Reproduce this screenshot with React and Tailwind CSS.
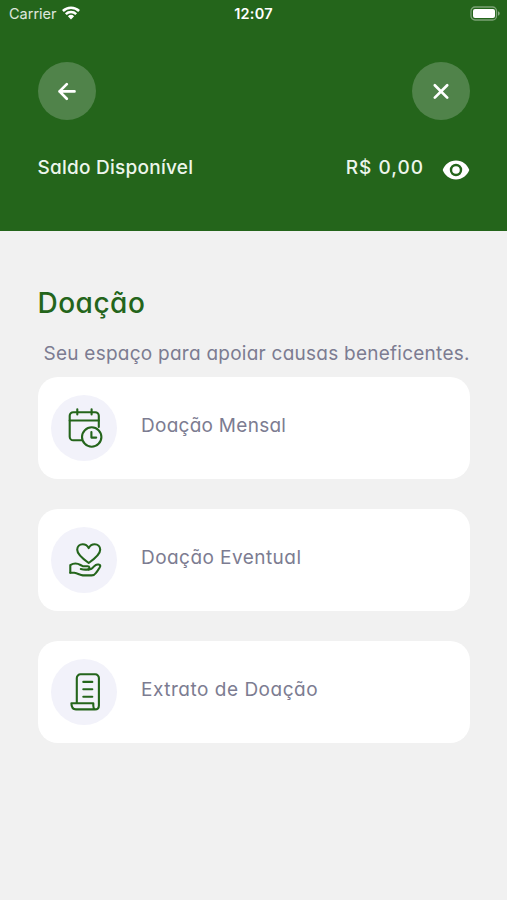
const CalendarClockIcon = () => (
  <svg viewBox="0 0 66 66" className="h-full w-full" fill="none" stroke="#24651b" strokeWidth="2.1" strokeLinecap="round" strokeLinejoin="round">
    <path d="M31 45.3H22.3a3.6 3.6 0 0 1-3.6-3.6V20.8a3.6 3.6 0 0 1 3.6-3.6h21.9a3.6 3.6 0 0 1 3.6 3.6V32" />
    <path d="M18.7 25.5h29.1M26.3 14.2v5.3M40.6 14.2v5.3" />
    <circle cx="40.7" cy="42" r="9.7" />
    <path d="M40.4 37v5.6h4.8" />
  </svg>
);

const HandHeartIcon = () => (
  <svg viewBox="0 0 66 66" className="h-full w-full" fill="none" stroke="#24651b" strokeWidth="2.1" strokeLinecap="round" strokeLinejoin="round">
    <path d="M37.7 36c-4.4-3.1-11.5-8.3-11.5-13.2 0-3.3 2.5-5.6 5.5-5.6 2.6 0 4.7 1.4 6 3.9 1.3-2.5 3.4-3.9 6-3.9 3 0 5.5 2.3 5.5 5.6 0 4.9-7.1 10.1-11.5 13.2Z" />
    <path d="M19.3 45.8v-7.6c2.9-1.9 7-2 10.2-.2l2.2 1.2h4.9c2.1 0 2.6 2.7.6 3.2-2.4.5-4.8.3-7.4-.3" />
    <path d="M37.5 42.6c2.6 0 4.1-1.3 5.4-3.1l1.6-1.3c1.7-1.3 5.1-.9 4.7 1.2-.3 1.5-2.9 4.4-4.3 6.600-1.100 1.700-2.300 2.400-4.300 2.400h-8.700c-3-.6-5.400-2.100-8.600-2.600h-4" />
  </svg>
);

const ReceiptIcon = () => (
  <svg viewBox="0 0 66 66" className="h-full w-full" fill="none" stroke="#24651b" strokeWidth="2.1" strokeLinecap="round" strokeLinejoin="round">
    <path d="M25.8 44V19a3.700 3.700 0 0 1 3.700-3.700h14.700a3.700 3.700 0 0 1 3.700 3.700v27.500c0 2.600-1.500 3.900-3.900 3.900H25c-3 0-4.600-2.100-4.600-6.100h21.900v2.500c0 2 .5 3.100 1.600 3.600" />
    <path d="M32.3 22.900h9M32.300 30.300h9M32.300 37.700h9" />
  </svg>
);

const options = [
  { label: 'Doação Mensal', icon: CalendarClockIcon, spacing: 'tracking-[0.27px]' },
  { label: 'Doação Eventual', icon: HandHeartIcon, spacing: 'tracking-[0.45px]' },
  { label: 'Extrato de Doação', icon: ReceiptIcon, spacing: 'tracking-[0.52px]' },
];

const StatusBar = () => (
  <div className="grid h-7 grid-cols-3 items-center pl-[9px] pr-[6px] text-white">
    <div className="flex items-center gap-[6px]">
      <span className="text-[14.5px] leading-5 text-white/85">Carrier</span>
      <svg viewBox="0 0 18 14" className="-ml-px -mt-[2px] h-[14px] w-[18px]" fill="none" stroke="currentColor" strokeWidth="2.5">
        <path d="M.9 5a11.5 11.5 0 0 1 16.2 0M3.8 8.2a7.5 7.5 0 0 1 10.4 0" />
        <path d="M9 13.5 5.9 10.3a4.5 4.5 0 0 1 6.2 0Z" fill="currentColor" stroke="none" />
      </svg>
    </div>
    <span className="pr-[3px] text-center text-[14.5px] font-semibold leading-5 tracking-[0.2px]">12:07</span>
    <svg viewBox="0 0 31 15" className="-mt-[2px] h-[15px] w-[31px] justify-self-end">
      <rect x="1" y="1" width="25.5" height="13" rx="4" fill="none" stroke="#fff" strokeOpacity=".4" strokeWidth="1.3" />
      <rect x="3" y="3" width="22" height="9" rx="2" fill="#fff" />
      <path d="M28 5.3c2.3.8 2.3 3.6 0 4.4Z" fill="#fff" fillOpacity=".45" />
    </svg>
  </div>
);

const EyeIcon = () => (
  <svg viewBox="0 0 28 20" className="h-5 w-7">
    <path fillRule="evenodd" fill="#fff" d="M14 .6C7.5.6 2.8 4.6.7 10 2.8 15.4 7.5 19.4 14 19.4S25.2 15.4 27.3 10C25.2 4.6 20.5.6 14 .6Zm0 15.6a6.2 6.2 0 1 1 0-12.4 6.2 6.2 0 0 1 0 12.4Z" />
    <circle cx="14" cy="10" r="3.8" fill="#fff" />
  </svg>
);

const RoundButton = ({ label, children }) => (
  <button aria-label={label} className="flex h-[58px] w-[58px] items-center justify-center rounded-full bg-[#50834a]">
    <svg viewBox="0 0 24 24" className="h-6 w-6" fill="none" stroke="#fff" strokeWidth="2.7" strokeLinecap="round" strokeLinejoin="round">
      {children}
    </svg>
  </button>
);

const App = () => {
  return (
    <div className="min-h-screen bg-[#f1f1f1] font-['Inter',sans-serif]">
      <header className="h-[231px] bg-[#24651b]">
        <StatusBar />
        <div className="flex justify-between pl-[38px] pr-[37px] pt-[34px]">
          <RoundButton label="Voltar">
            <path d="M19.5 12.4h-15M11.8 5.1 4.500 12.400l7.300 7.300" />
          </RoundButton>
          <RoundButton label="Fechar">
            <path d="m5.8 6.2 12.4 12.4M18.200 6.200 5.800 18.600" />
          </RoundButton>
        </div>
        <div className="flex items-center pl-[37.5px] pr-[37px] pt-9 text-[19px] font-medium leading-6 text-[#edf6ec] [font-feature-settings:'cv11']">
          <span className="tracking-[0.25px]">Saldo Disponível</span>
          <span className="ml-auto mr-[18px] tracking-[1px]">R$ 0,00</span>
          <span className="pt-1">
            <EyeIcon />
          </span>
        </div>
      </header>

      <main className="px-[37.5px] pt-[53px] [font-feature-settings:'cv11']">
        <h1 className="text-[28px] font-medium leading-[38px] tracking-[0.5px] text-[#24651b]">Doação</h1>
        <p className="mt-[20px] whitespace-nowrap pl-[6px] text-[19px] leading-6 tracking-[0.25px] text-[#7c7c91]">
          Seu espaço para apoiar causas beneficentes.
        </p>
        <div className="mt-[11px] flex flex-col gap-[30px]">
          {options.map(({ label, icon: Icon, spacing }) => (
            <button key={label} className="flex h-[102px] items-center rounded-[20px] bg-white pl-[13.5px] text-left">
              <span className="h-[66px] w-[66px] rounded-full bg-[#f2f2fa]">
                <Icon />
              </span>
              <span className={`ml-6 pb-1 text-[19px] leading-6 text-[#7c7c91] ${spacing}`}>{label}</span>
            </button>
          ))}
        </div>
      </main>
    </div>
  );
};

export default App;
